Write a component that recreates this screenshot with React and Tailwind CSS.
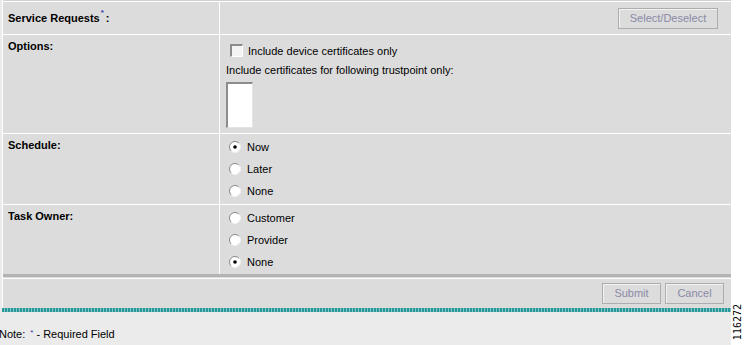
import React from "react";

const Radio = ({ checked }) => (
  <svg width="12" height="12" viewBox="0 0 12 12" className="shrink-0">
    <circle cx="6" cy="6" r="5.5" fill="#fff" />
    <path d="M2.1 9.9 A5.5 5.5 0 0 1 9.9 2.1" stroke="#8a8a8a" fill="none" strokeWidth="1" />
    <path d="M10.3 2.6 A5.5 5.5 0 0 1 2.6 10.3" stroke="#f0f0f0" fill="none" strokeWidth="1" />
    {checked && <circle cx="6" cy="6" r="1.8" fill="#000" />}
  </svg>
);

const Checkbox = () => (
  <div className="w-[13px] h-[13px] shrink-0 bg-[#f4f4f4] border-t-2 border-l-2 border-t-[#8c8c8c] border-l-[#8c8c8c] border-r border-b border-r-white border-b-white" />
);

const Label = ({ children }) => (
  <div className="w-[217px] shrink-0 border-r border-white pl-[5px] pt-[5px] font-bold text-[11px] leading-[13px] text-black">
    {children}
  </div>
);

const RadioRow = ({ label, checked }) => (
  <div className="h-[22px] flex items-center gap-[6px] pl-[9px]">
    <Radio checked={checked} />
    <span className="text-[11px] leading-[13px] text-black">{label}</span>
  </div>
);

const DimButton = ({ children, width }) => (
  <button
    className={`h-[21px] ${width} border border-[#adadad] bg-[#dcdcdc] shadow-[inset_1px_1px_0_#f2f2f2] text-[11px] text-[#8a8aa6]`}
  >
    {children}
  </button>
);

export default function App() {
  return (
    <div
      className="w-[745px] h-[345px] flex bg-white overflow-hidden"
      style={{ fontFamily: '"Liberation Sans", Arial, sans-serif' }}
    >
      <div className="w-[731px] shrink-0 flex flex-col bg-[#ebebeb]">
        <div className="ml-[2px] bg-[#dcdcdc] border-l border-white">
          <div className="h-[1px] bg-[#d0d0d0]" />
          <div className="border-t border-white flex h-[33px]">
            <div className="w-[217px] shrink-0 border-r border-white pl-[5px] flex items-center font-bold text-[11px] text-black">
              <span>Service Requests</span>
              <span className="text-[8px] text-[#3333aa] -mt-[10px] ml-[1px]">*</span>
              <span className="ml-[2px]">:</span>
            </div>
            <div className="flex-1 flex items-center justify-end pr-[13px]">
              <DimButton width="w-[100px]">Select/Deselect</DimButton>
            </div>
          </div>
          <div className="border-t border-white flex h-[99px]">
            <Label>Options:</Label>
            <div className="flex-1 pl-[6px] pt-[8px]">
              <div className="flex items-center gap-[5px] ml-[4px] h-[14px]">
                <Checkbox />
                <span className="text-[11px] leading-[13px] text-black mt-[2px]">
                  Include device certificates only
                </span>
              </div>
              <div className="text-[11px] leading-[13px] text-black mt-[7px]">
                Include certificates for following trustpoint only:
              </div>
              <div className="mt-[5px] w-[27px] h-[46px] bg-white border-t-2 border-l-2 border-t-[#8c8c8c] border-l-[#8c8c8c] border-r border-b border-r-[#e4e4e4] border-b-[#e4e4e4]" />
            </div>
          </div>
          <div className="border-t border-white flex h-[71px]">
            <Label>Schedule:</Label>
            <div className="flex-1 pt-[2px]">
              <RadioRow label="Now" checked />
              <RadioRow label="Later" />
              <RadioRow label="None" />
            </div>
          </div>
          <div className="border-t border-white flex h-[70px]">
            <Label>Task Owner:</Label>
            <div className="flex-1 pt-[2px]">
              <RadioRow label="Customer" />
              <RadioRow label="Provider" />
              <RadioRow label="None" checked />
            </div>
          </div>
          <div className="h-[3px] bg-[#b4b4b4]" />
          <div className="h-[1px]" />
          <div className="border-t border-white h-[30px] flex items-start justify-end gap-[4px] pt-[4px] pr-[7px]">
            <DimButton width="w-[59px]">Submit</DimButton>
            <DimButton width="w-[59px]">Cancel</DimButton>
          </div>
        </div>
        <div className="ml-[2px] h-[4px] bg-[repeating-linear-gradient(90deg,#2a9898_0_2px,#7fc6c6_2px_3px)]" />
        <div className="flex-1 flex items-end pb-[4px] text-[11px] leading-[13px] text-black -ml-[1px]">
          <span>Note:</span>
          <span className="ml-[5px] text-[8px] leading-[8px] text-[#3333aa] self-start mt-[17px]">*</span>
          <span className="ml-[3px]">- Required Field</span>
        </div>
      </div>
      <div className="flex-1 flex flex-col justify-end items-center pb-[5px]">
        <span
          className="[writing-mode:vertical-rl] rotate-180 text-[10px] leading-none text-black"
          style={{ fontFamily: '"DejaVu Sans Mono", monospace' }}
        >
          116272
        </span>
      </div>
    </div>
  );
}
